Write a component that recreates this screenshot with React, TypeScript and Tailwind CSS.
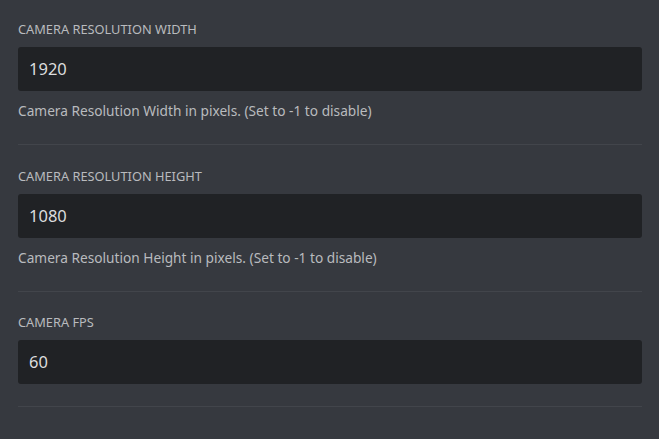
import React from "react";

const font = { fontFamily: '"Noto Sans", "Open Sans", sans-serif' };

function Field({ label, value, desc, pt }: { label: string; value: string; desc?: string; pt: string }) {
  return (
    <div className={pt}>
      <div className="text-[12.8px] leading-[16px] uppercase text-[#b9bbbe] mb-[10px]">{label}</div>
      <div className="h-[44px] rounded-[3px] bg-[#202225] flex items-center px-[11px] text-[16.5px] text-[#dcddde]">
        {value}
      </div>
      {desc && (
        <div className="mt-[10px] text-[13.7px] leading-[20px] text-[#b9bbbe]">{desc}</div>
      )}
      <div className={`${desc ? "mt-[23px]" : "mt-[22px]"} h-px bg-[#42454b]`} />
    </div>
  );
}

export default function App() {
  return (
    <div className="w-[659px] h-[439px] bg-[#36393f] pl-[18px] pr-[17px] overflow-hidden" style={font}>
      <Field pt="pt-[21px]" label="Camera Resolution Width" value="1920" desc="Camera Resolution Width in pixels. (Set to -1 to disable)" />
      <Field pt="pt-[23px]" label="Camera Resolution Height" value="1080" desc="Camera Resolution Height in pixels. (Set to -1 to disable)" />
      <Field pt="pt-[22px]" label="Camera FPS" value="60" />
    </div>
  );
}
